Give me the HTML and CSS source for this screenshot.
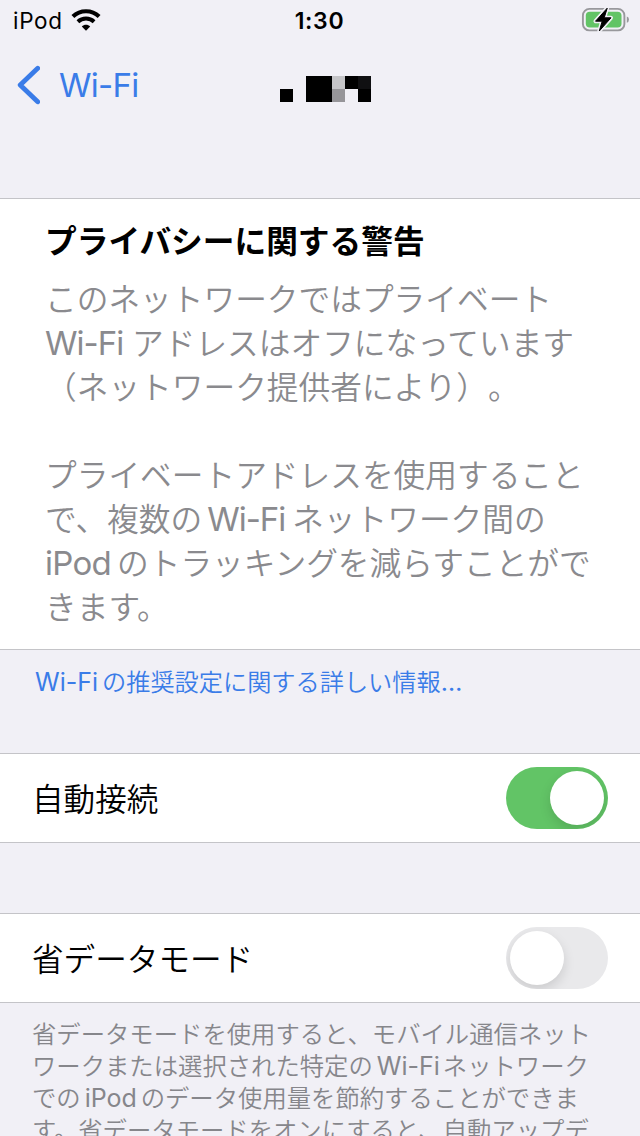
FILE: index.html
```
<!DOCTYPE html>
<html lang="ja">
<head>
<meta charset="utf-8">
<title>Wi-Fi</title>
<link rel="stylesheet" href="styles.css">
</head>
<body>
<main class="screen">
  <header class="status">
    <div class="carrier"><span class="device">iPod</span>
      <svg class="wifi" width="32" height="24" viewBox="0 0 32 24">
        <path d="M2.9 8.5C10.2 1.4 21.8 1.4 29.1 8.5" fill="none" stroke="#000" stroke-width="4.1"/>
        <path d="M7.9 13.7C12.4 9.5 19.6 9.5 24.1 13.7" fill="none" stroke="#000" stroke-width="3.9"/>
        <path d="M16 22.7L11.8 18.4C14 16.1 18 16.1 20.2 18.4Z" fill="#000"/>
      </svg>
    </div>
    <time class="clock">1:30</time>
    <svg class="battery" width="50" height="30" viewBox="0 0 50 30">
      <rect x="2.9" y="4.9" width="41.5" height="21.5" rx="6.5" fill="none" stroke="#98989c" stroke-width="1.9"/>
      <rect x="5.8" y="7.8" width="35.7" height="15.8" rx="4" fill="#62c466"/>
      <path d="M46.8 12.5Q49 13.2 49 15.6Q49 18 46.8 18.8Z" fill="#98989c"/>
      <path d="M27.2 4.2L15.5 17.2H22.2L19.3 27L31 13.8H24.2Z" fill="#000" stroke="#f1f0f6" stroke-width="4" stroke-linejoin="round"/>
      <path d="M27.2 4.2L15.5 17.2H22.2L19.3 27L31 13.8H24.2Z" fill="#000" stroke="#000" stroke-width="1" stroke-linejoin="round"/>
    </svg>
  </header>

  <nav class="nav">
    <a class="back"><svg class="chevron" width="24" height="40" viewBox="0 0 24 40"><path d="M21.7 3.2L4.2 20L21.7 36.8" fill="none" stroke="#3a7ce8" stroke-width="4.8" stroke-linecap="round" stroke-linejoin="round"/></svg><span class="back-label">Wi-Fi</span></a>
    <svg class="network" width="92" height="26" viewBox="0 0 92 26" shape-rendering="crispEdges">
      <path d="M0 13h13v13H0zM26 0h26v26H26zM65 0h26v26H78V13H65z" fill="#000"/>
      <path d="M52 0h13v13H52z" fill="#c5c5c8"/>
      <path d="M52 13h13v13H52z" fill="#969599"/>
      <path d="M78 0h13v13H78z" fill="#101012"/>
    </svg>
  </nav>

  <section class="warning">
    <h1 class="title">プライバシーに関する警告</h1>
    <p class="copy">
      <span class="line">このネットワークではプライベート</span>
      <span class="line"><span class="latin wf-start">Wi-Fi</span>アドレスはオフになっています</span>
      <span class="line">（ネットワーク提供者により）。</span>
    </p>
    <p class="copy">
      <span class="line">プライベートアドレスを使用すること</span>
      <span class="line">で、複数の<span class="latin wf-mid">Wi-Fi</span>ネットワーク間の</span>
      <span class="line"><span class="latin pod-start">iPod</span>のトラッキングを減らすことがで</span>
      <span class="line">きます。</span>
    </p>
  </section>

  <a class="more"><span class="latin more-wifi">Wi-Fi</span>の推奨設定に関する詳しい情報<span class="latin dots">…</span></a>

  <section class="row">
    <span class="row-label">自動接続</span>
    <span class="switch on"><span class="knob"></span></span>
  </section>
  <section class="row second">
    <span class="row-label">省データモード</span>
    <span class="switch"><span class="knob"></span></span>
  </section>

  <p class="footnote">
    <span class="line">省データモードを使用すると、モバイル通信ネット</span>
    <span class="line">ワークまたは選択された特定の<span class="latin foot-wifi">Wi-Fi</span>ネットワーク</span>
    <span class="line">での<span class="latin foot-pod">iPod</span>のデータ使用量を節約することができま</span>
    <span class="line">す。省データモードをオンにすると、自動アップデ</span>
  </p>
</main>
</body>
</html>
```
FILE: styles.css
```
* { box-sizing: border-box; }
body {
  margin: 0;
  background: #f1f0f6;
  font-family: "Noto Sans CJK JP", sans-serif;
  font-weight: 350;
  text-spacing-trim: space-all;
  color: #000;
}
.screen { width: 640px; height: 1136px; overflow: hidden; }
.status {
  height: 40px;
  display: grid;
  grid-template-columns: 1fr auto 1fr;
  padding: 0 10px 0 13px;
  font-family: Inter, sans-serif;
}
.carrier { display: flex; }
.device { font-size: 22.5px; font-weight: 400; line-height: 42px; letter-spacing: 0.7px; width: 57px; }
.wifi { margin-top: 8px; }
.clock { font-size: 23px; font-weight: 600; line-height: 42px; letter-spacing: 0.7px; margin-right: 4px; }
.battery { justify-self: end; margin-top: 4px; }
.nav {
  height: 158px;
  display: grid;
  grid-template-columns: 280px 1fr;
}
.back { display: flex; height: 89px; align-items: center; padding-left: 16px; color: #3a7ce8; }
.chevron { flex: none; }
.back-label { font: 400 33px/40px Inter, sans-serif; margin-left: 19px; letter-spacing: -0.7px; }
.network { margin-top: 36px; }
.warning {
  height: 452px;
  padding: 18px 0 0 45px;
  background: #fff;
  border-top: 1px solid #c4c4c8;
  border-bottom: 1px solid #c4c4c8;
}
.title { margin: 0; font-size: 31.7px; line-height: 44px; font-weight: 700; white-space: nowrap; }
.copy { margin: 14px 0 44px; font-size: 31.7px; line-height: 44px; color: #8a8a8e; }
.copy + .copy { margin: 0; }
.line { display: block; height: 1lh; white-space: nowrap; }
.latin { display: inline-block; font-family: Inter, sans-serif; line-height: 1; font-weight: 400; }
.copy .latin { font-size: 33px; letter-spacing: -1px; }
.wf-start { width: 87px; }
.wf-mid { width: 90px; padding-left: 5px; }
.copy .pod-start { width: 72px; letter-spacing: -0.7px; }
.more {
  display: block;
  height: 103px;
  padding: 14px 0 0 35px;
  font-size: 24.2px;
  line-height: 34px;
  color: #3a7ce8;
  white-space: nowrap;
}
.more .latin, .footnote .latin { font-size: 25px; }
.more-wifi { width: 67px; }
.row {
  display: flex;
  align-items: center;
  justify-content: space-between;
  height: 90px;
  padding: 0 32px;
  background: #fff;
  border-top: 1px solid #c4c4c8;
  border-bottom: 1px solid #c4c4c8;
}
.second { margin-top: 70px; }
.row-label { font-size: 31.6px; line-height: 44px; padding-bottom: 3px; }
.switch { display: flex; width: 102px; height: 62px; padding: 4px; border-radius: 31px; background: #e9e9eb; overflow: hidden; }
.switch.on { background: #62c466; justify-content: flex-end; }
.knob { width: 54px; height: 54px; border-radius: 50%; background: #fff; box-shadow: 0 5px 12px rgba(0, 0, 0, 0.13); }
.footnote { margin: 14px 0 0 32px; font-size: 24.35px; line-height: 32px; color: #86868b; }
.foot-wifi { width: 70px; padding-left: 4px; }
.foot-pod { width: 60px; padding-left: 4px; }
```
